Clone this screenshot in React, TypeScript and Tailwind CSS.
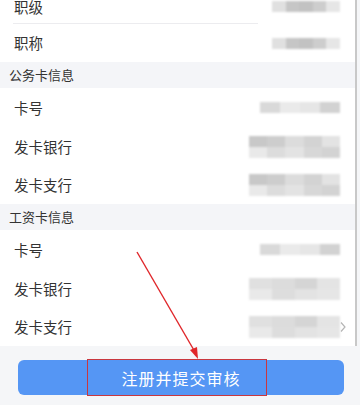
import { FC } from 'react';

type Blur = { w: number; tones: string[]; twoLine?: boolean };

const BlurValue: FC<Blur> = ({ w, tones, twoLine }) => {
  return (
    <div className="flex flex-col blur-[1px]" style={{ width: w }}>
      <div className="flex h-[11px]">
        {tones.map((t, i) => (
          <div key={i} className="h-full flex-1" style={{ background: t }} />
        ))}
      </div>
      {twoLine && (
        <div className="flex h-[11px]">
          {tones
            .slice()
            .reverse()
            .map((t, i) => (
              <div key={i} className="h-full flex-1 opacity-80" style={{ background: t }} />
            ))}
        </div>
      )}
    </div>
  );
};

const Row: FC<{
  label: string;
  h: string;
  value: Blur;
  divider?: boolean;
  chevron?: boolean;
}> = ({ label, h, value, divider, chevron }) => {
  return (
    <div className={`relative flex items-center bg-white pl-[14px] ${h}`}>
      <span className="text-[14.5px] text-[#333]">{label}</span>
      <div className="ml-auto mr-[15px] flex items-center">
        <BlurValue {...value} />
      </div>
      {chevron && (
        <svg className="absolute right-[9px] top-1/2 -translate-y-1/2" width="6" height="11" viewBox="0 0 6 11">
          <path d="M1 1 L5 5.5 L1 10" fill="none" stroke="#b5b5b5" strokeWidth="1.2" />
        </svg>
      )}
      {divider && (
        <div className="absolute bottom-0 left-[13px] right-[97px] h-px bg-[#ececef]" />
      )}
    </div>
  );
};

const Header: FC<{ title: string }> = ({ title }) => (
  <div className="flex h-[26px] items-center bg-[#f4f5f8] pl-[9px] text-[13px] text-[#333]">
    {title}
  </div>
);

const gA = ['#e0e0e0', '#c6c6c6', '#c2c2c2', '#cdcdcd', '#e6e6e6'];
const gB = ['#d9d9d9', '#eaeaea', '#e6e6e6', '#d2d2d2'];
const gC = ['#c8c8c8', '#cdcdcd', '#dcdcdc', '#d3d3d3', '#e3e3e3'];
const gD = ['#e0e0e0', '#dcdcdc', '#d5d5d5', '#e4e4e4'];

const App: FC = () => {
  return (
    <div
      className="relative h-[405px] w-[360px] overflow-hidden bg-[#f5f6f8]"
      style={{ fontFamily: '"Noto Sans CJK SC", "Noto Sans", sans-serif' }}
    >
      <div className="-mt-[11px] w-[357px] border-r-2 border-[#c8c8c8] bg-white">
        <Row label="职级" h="h-[35px]" value={{ w: 68, tones: gA }} divider />
        <Row label="职称" h="h-[38px]" value={{ w: 68, tones: gA }} />
        <Header title="公务卡信息" />
        <Row label="卡号" h="h-[39px]" value={{ w: 80, tones: gB }} />
        <Row label="发卡银行" h="h-[39px]" value={{ w: 91, tones: gC, twoLine: true }} />
        <Row label="发卡支行" h="h-[38px]" value={{ w: 91, tones: gC, twoLine: true }} />
        <Header title="工资卡信息" />
        <Row label="卡号" h="h-[39px]" value={{ w: 80, tones: gB }} />
        <Row label="发卡银行" h="h-[39px]" value={{ w: 91, tones: gD, twoLine: true }} />
        <Row label="发卡支行" h="h-[38px]" value={{ w: 91, tones: gD, twoLine: true }} chevron />
      </div>

      <div className="px-[18px] pt-[14px]">
        <button className="flex h-[35px] w-[326px] items-center justify-center rounded-[6px] bg-[#5596f4] text-[16px] tracking-[1px] text-white">
          注册并提交审核
        </button>
      </div>

      {/* annotation */}
      <div className="absolute left-[87px] top-[359px] h-[37px] w-[180px] border-[1.5px] border-[#c9373f]" />
      <svg className="absolute left-0 top-0" width="360" height="405" viewBox="0 0 360 405">
        <line x1="137" y1="252" x2="195" y2="352" stroke="#e0262a" strokeWidth="1.4" />
        <polygon points="198,359 190,350 197,347" fill="#e0262a" />
      </svg>
    </div>
  );
};

export default App;
